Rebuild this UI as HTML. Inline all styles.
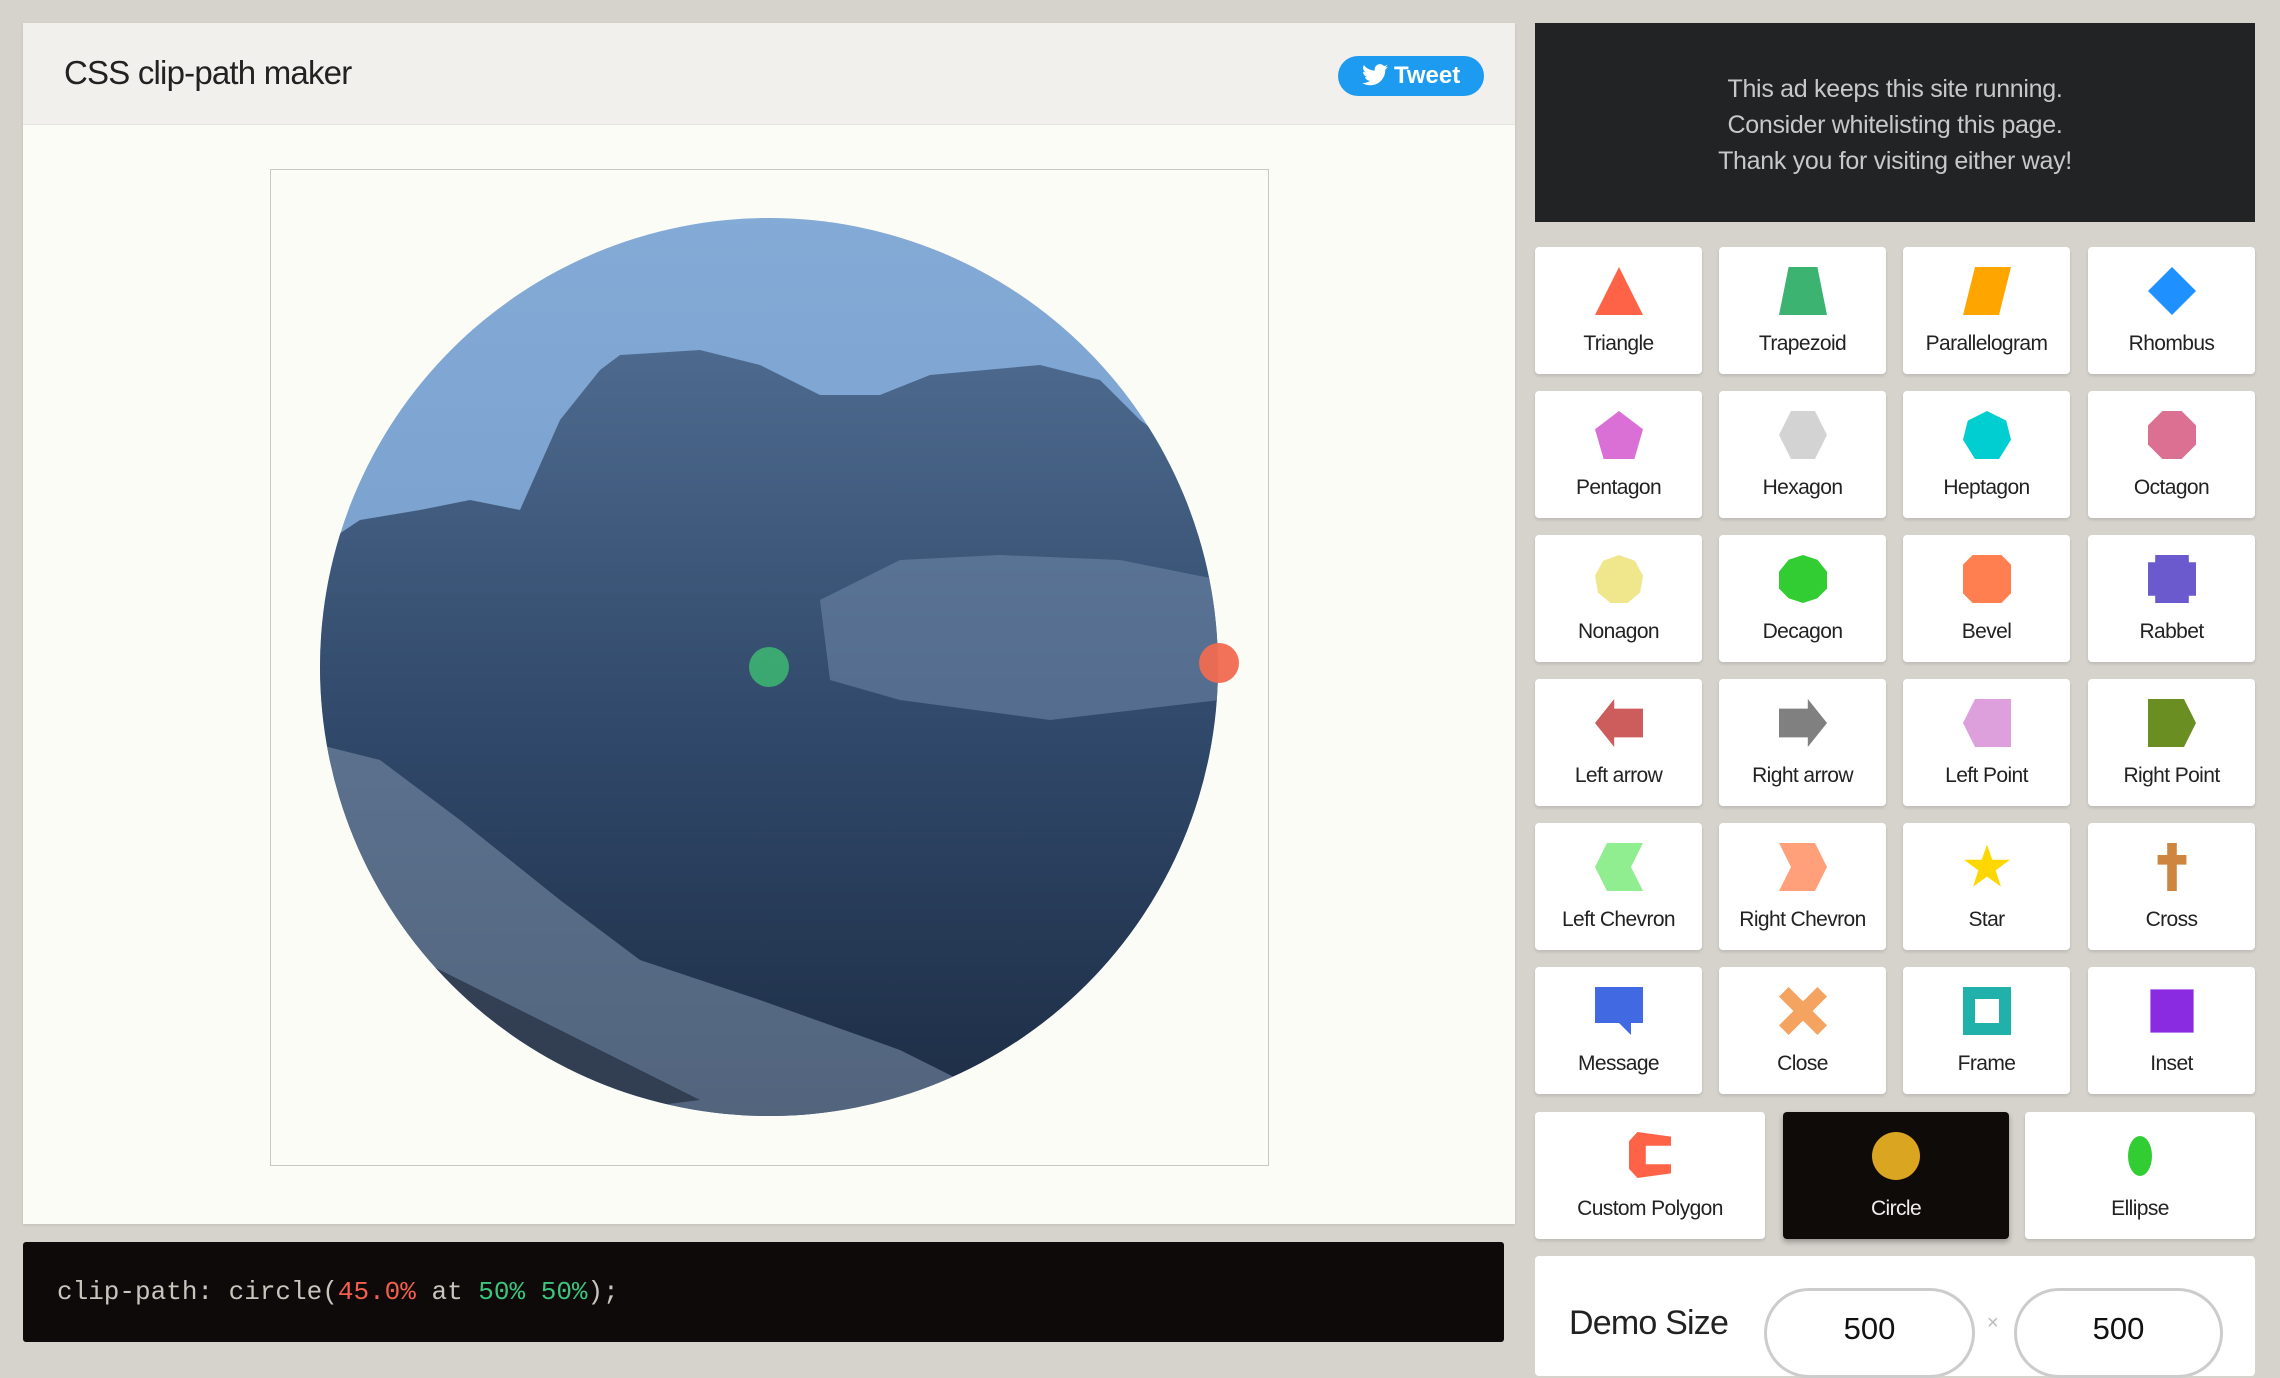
<!DOCTYPE html>
<html><head><meta charset="utf-8"><style>
*{box-sizing:border-box;margin:0;padding:0}
body{width:2280px;height:1360px;background:#d6d3cd;font-family:"Liberation Sans",sans-serif;position:relative;overflow:hidden}
.abs{position:absolute}
.card{position:absolute;width:167px;height:127px;background:#fff;border-radius:4px;box-shadow:0 2px 3px rgba(0,0,0,.12)}
.card svg{position:absolute;left:50%;top:20px;margin-left:-24px;width:48px;height:48px}
.card span{position:absolute;left:0;right:0;top:85px;text-align:center;font-size:21px;color:#222;letter-spacing:-0.6px}
</style></head><body>
<div class="abs" style="left:23px;top:23px;width:1492px;height:1201px;background:#fcfcf7;box-shadow:0 1px 3px rgba(0,0,0,.1)"></div>
<div class="abs" style="left:23px;top:23px;width:1492px;height:102px;background:#f1f0ec;border-bottom:1px solid #e6e4de"></div>
<div class="abs" style="left:64px;top:54px;font-size:33px;color:#222;letter-spacing:-0.8px">CSS clip-path maker</div>
<div class="abs" style="left:1338px;top:56px;width:146px;height:40px;border-radius:20px;background:#1d9bf0;color:#fff;font-weight:bold;font-size:24px;line-height:40px;padding-left:24px">
<svg width="26" height="22" viewBox="0 0 24 20" style="vertical-align:-3px;margin-right:6px"><path fill="#fff" d="M24 2.4c-.9.4-1.800.6-2.800.8 1-.6 1.800-1.600 2.200-2.700-1 .6-2 1-3.100 1.200C19.300.7 18 0 16.600 0c-2.700 0-4.900 2.200-4.900 4.900 0 .4 0 .8.1 1.100C7.700 5.800 4.100 3.900 1.700.9c-.4.7-.7 1.600-.7 2.500 0 1.700.9 3.200 2.200 4.100-.8 0-1.600-.2-2.200-.6v.1c0 2.400 1.700 4.400 3.900 4.800-.4.1-.8.2-1.300.2-.3 0-.6 0-.9-.1.6 2 2.400 3.400 4.600 3.400-1.700 1.300-3.800 2.100-6.100 2.100-.4 0-.8 0-1.200-.1 2.200 1.400 4.800 2.200 7.500 2.200 9.100 0 14-7.500 14-14v-.6c1-.7 1.800-1.600 2.400-2.500z"/></svg>Tweet</div>
<div class="abs" style="left:270px;top:169px;width:999px;height:997px;border:1px solid #c9c9c4;background:#fcfcf7"></div>
<svg class="abs" style="left:0;top:0" width="1520" height="1230">
<defs><clipPath id="c"><circle cx="769" cy="667" r="449"/></clipPath>
<linearGradient id="sky" x1="0" y1="0" x2="0" y2="1"><stop offset="0" stop-color="#84aad6"/><stop offset="1" stop-color="#6e95c6"/></linearGradient>
<linearGradient id="m" x1="0" y1="0" x2="0" y2="1"><stop offset="0" stop-color="#4d6a8e"/><stop offset=".5" stop-color="#2f4768"/><stop offset="1" stop-color="#1b2a40"/></linearGradient></defs>
<g clip-path="url(#c)">
<rect x="300" y="200" width="950" height="950" fill="url(#sky)"/>
<path d="M300 560 L360 520 L420 510 L470 500 L520 510 L560 420 L600 370 L620 355 L700 350 L760 365 L820 395 L880 395 L930 375 L1040 365 L1100 380 L1140 420 L1180 450 L1230 480 L1230 1150 L300 1150Z" fill="url(#m)"/>
<path d="M820 600 L900 560 L1000 555 L1120 560 L1220 580 L1220 700 L1050 720 L900 700 L830 680Z" fill="#6c86a6" opacity=".6"/>
<path d="M300 740 L380 760 L460 820 L560 900 L640 960 L760 1000 L900 1050 L1000 1100 L1200 1150 L300 1150Z" fill="#8093ad" opacity=".55"/>
<path d="M300 900 L500 1000 L700 1100 L300 1150Z" fill="#1c2535" opacity=".6"/>
</g>
<circle cx="769" cy="667" r="20" fill="#3cb371" opacity=".9"/>
<circle cx="1219" cy="663" r="20" fill="#f06a50" opacity=".95"/>
</svg>
<div class="abs" style="left:23px;top:1242px;width:1481px;height:100px;background:#0e0a09;border-radius:3px;font-family:'Liberation Mono',monospace;font-size:26px;color:#c9c4bd;padding-left:34px;line-height:100px">clip-path: circle(<span style="color:#f25f4c">45.0%</span> at <span style="color:#3cc47c">50%</span> <span style="color:#3cc47c">50%</span>);</div>
<div class="abs" style="left:1535px;top:23px;width:720px;height:199px;background:#222324;color:#c8c8c8;font-size:25px;text-align:center;line-height:36px;padding-top:48px;letter-spacing:-0.3px">This ad keeps this site running.<br>Consider whitelisting this page.<br>Thank you for visiting either way!</div>

<div class="card" style="left:1535px;top:247px"><svg viewBox="0 0 100 100" preserveAspectRatio="none"><polygon points="50,0 0,100 100,100" fill="#ff6347"/></svg><span>Triangle</span></div>
<div class="card" style="left:1719px;top:247px"><svg viewBox="0 0 100 100" preserveAspectRatio="none"><polygon points="20,0 80,0 100,100 0,100" fill="#3cb371"/></svg><span>Trapezoid</span></div>
<div class="card" style="left:1903px;top:247px"><svg viewBox="0 0 100 100" preserveAspectRatio="none"><polygon points="25,0 100,0 75,100 0,100" fill="#ffa500"/></svg><span>Parallelogram</span></div>
<div class="card" style="left:2088px;top:247px"><svg viewBox="0 0 100 100" preserveAspectRatio="none"><polygon points="50,0 100,50 50,100 0,50" fill="#1e90ff"/></svg><span>Rhombus</span></div>

<div class="card" style="left:1535px;top:391px"><svg viewBox="0 0 100 100" preserveAspectRatio="none"><polygon points="50,0 100,38 82,100 18,100 0,38" fill="#da70d6"/></svg><span>Pentagon</span></div>
<div class="card" style="left:1719px;top:391px"><svg viewBox="0 0 100 100" preserveAspectRatio="none"><polygon points="25,0 75,0 100,50 75,100 25,100 0,50" fill="#d3d3d3"/></svg><span>Hexagon</span></div>
<div class="card" style="left:1903px;top:391px"><svg viewBox="0 0 100 100" preserveAspectRatio="none"><polygon points="50,0 90,20 100,60 75,100 25,100 0,60 10,20" fill="#00ced1"/></svg><span>Heptagon</span></div>
<div class="card" style="left:2088px;top:391px"><svg viewBox="0 0 100 100" preserveAspectRatio="none"><polygon points="30,0 70,0 100,30 100,70 70,100 30,100 0,70 0,30" fill="#db7093"/></svg><span>Octagon</span></div>

<div class="card" style="left:1535px;top:535px"><svg viewBox="0 0 100 100" preserveAspectRatio="none"><polygon points="50,0 83,12 100,43 94,78 68,100 32,100 6,78 0,43 17,12" fill="#f0e68c"/></svg><span>Nonagon</span></div>
<div class="card" style="left:1719px;top:535px"><svg viewBox="0 0 100 100" preserveAspectRatio="none"><polygon points="50,0 80,10 100,35 100,70 80,90 50,100 20,90 0,70 0,35 20,10" fill="#32cd32"/></svg><span>Decagon</span></div>
<div class="card" style="left:1903px;top:535px"><svg viewBox="0 0 100 100" preserveAspectRatio="none"><polygon points="20,0 80,0 100,20 100,80 80,100 20,100 0,80 0,20" fill="#ff7f50"/></svg><span>Bevel</span></div>
<div class="card" style="left:2088px;top:535px"><svg viewBox="0 0 100 100" preserveAspectRatio="none"><polygon points="0,15 15,15 15,0 85,0 85,15 100,15 100,85 85,85 85,100 15,100 15,85 0,85" fill="#6a5acd"/></svg><span>Rabbet</span></div>

<div class="card" style="left:1535px;top:679px"><svg viewBox="0 0 100 100" preserveAspectRatio="none"><polygon points="40,0 40,20 100,20 100,80 40,80 40,100 0,50" fill="#cd5c5c"/></svg><span>Left arrow</span></div>
<div class="card" style="left:1719px;top:679px"><svg viewBox="0 0 100 100" preserveAspectRatio="none"><polygon points="0,20 60,20 60,0 100,50 60,100 60,80 0,80" fill="#808080"/></svg><span>Right arrow</span></div>
<div class="card" style="left:1903px;top:679px"><svg viewBox="0 0 100 100" preserveAspectRatio="none"><polygon points="25,0 100,0 100,100 25,100 0,50" fill="#dda0dd"/></svg><span>Left Point</span></div>
<div class="card" style="left:2088px;top:679px"><svg viewBox="0 0 100 100" preserveAspectRatio="none"><polygon points="0,0 75,0 100,50 75,100 0,100" fill="#6b8e23"/></svg><span>Right Point</span></div>

<div class="card" style="left:1535px;top:823px"><svg viewBox="0 0 100 100" preserveAspectRatio="none"><polygon points="25,0 100,0 75,50 100,100 25,100 0,50" fill="#90ee90"/></svg><span>Left Chevron</span></div>
<div class="card" style="left:1719px;top:823px"><svg viewBox="0 0 100 100" preserveAspectRatio="none"><polygon points="0,0 75,0 100,50 75,100 0,100 25,50" fill="#ffa07a"/></svg><span>Right Chevron</span></div>
<div class="card" style="left:1903px;top:823px"><svg viewBox="0 0 100 100" preserveAspectRatio="none"><polygon points="50,3 61,35 98,35 68,57 79,91 50,70 21,91 32,57 2,35 39,35" fill="#ffd700"/></svg><span>Star</span></div>
<div class="card" style="left:2088px;top:823px"><svg viewBox="0 0 100 100" preserveAspectRatio="none"><polygon points="40,0 60,0 60,25 80,25 80,45 60,45 60,100 40,100 40,45 20,45 20,25 40,25" fill="#cd853f"/></svg><span>Cross</span></div>

<div class="card" style="left:1535px;top:967px"><svg viewBox="0 0 100 100" preserveAspectRatio="none"><polygon points="0,0 100,0 100,75 75,75 75,100 50,75 0,75" fill="#4169e1"/></svg><span>Message</span></div>
<div class="card" style="left:1719px;top:967px"><svg viewBox="0 0 100 100" preserveAspectRatio="none"><polygon points="20,0 50,30 80,0 100,20 70,50 100,80 80,100 50,70 20,100 0,80 30,50 0,20" fill="#f4a460"/></svg><span>Close</span></div>
<div class="card" style="left:1903px;top:967px"><svg viewBox="0 0 100 100" preserveAspectRatio="none"><path d="M0 0H100V100H0Z M25 25V75H75V25Z" fill="#20b2aa" fill-rule="evenodd"/></svg><span>Frame</span></div>
<div class="card" style="left:2088px;top:967px"><svg viewBox="0 0 100 100" preserveAspectRatio="none"><rect x="5" y="5" width="90" height="90" fill="#8a2be2"/></svg><span>Inset</span></div>

<div class="card" style="left:1535px;top:1112px;width:230px"><svg viewBox="0 0 100 100" preserveAspectRatio="none" style="top:20px;margin-left:-21px;width:42px;height:46px"><polygon points="0,20 20,0 100,10 100,30 40,30 40,70 100,70 100,90 20,100 0,80" fill="#ff6347"/></svg><span>Custom Polygon</span></div>
<div class="card" style="left:1783px;top:1112px;width:226px;background:#0f0b09;box-shadow:0 3px 6px rgba(0,0,0,.3)"><svg viewBox="0 0 100 100" style="top:20px;margin-left:-24px;width:48px;height:48px" preserveAspectRatio="none"><ellipse cx="50" cy="50" rx="50" ry="50" fill="#daa520"/></svg><span style="color:#eee">Circle</span></div>
<div class="card" style="left:2025px;top:1112px;width:230px"><svg viewBox="0 0 100 100" preserveAspectRatio="none" style="top:24px;margin-left:-12px;width:24px;height:40px"><ellipse cx="50" cy="50" rx="50" ry="50" fill="#32cd32"/></svg><span>Ellipse</span></div>

<div class="abs" style="left:1535px;top:1256px;width:720px;height:120px;background:#fff;border-radius:4px"></div>
<div class="abs" style="left:1569px;top:1304px;font-size:34px;color:#222;letter-spacing:-0.8px">Demo Size</div>
<div class="abs" style="left:1764px;top:1288px;width:211px;height:90px;border:3px solid #ccc;border-radius:45px;font-size:31px;color:#111;text-align:center;padding-top:20px">500</div>
<div class="abs" style="left:1987px;top:1312px;font-size:20px;color:#bbb">×</div>
<div class="abs" style="left:2014px;top:1288px;width:209px;height:90px;border:3px solid #ccc;border-radius:45px;font-size:31px;color:#111;text-align:center;padding-top:20px">500</div>
</body></html>
